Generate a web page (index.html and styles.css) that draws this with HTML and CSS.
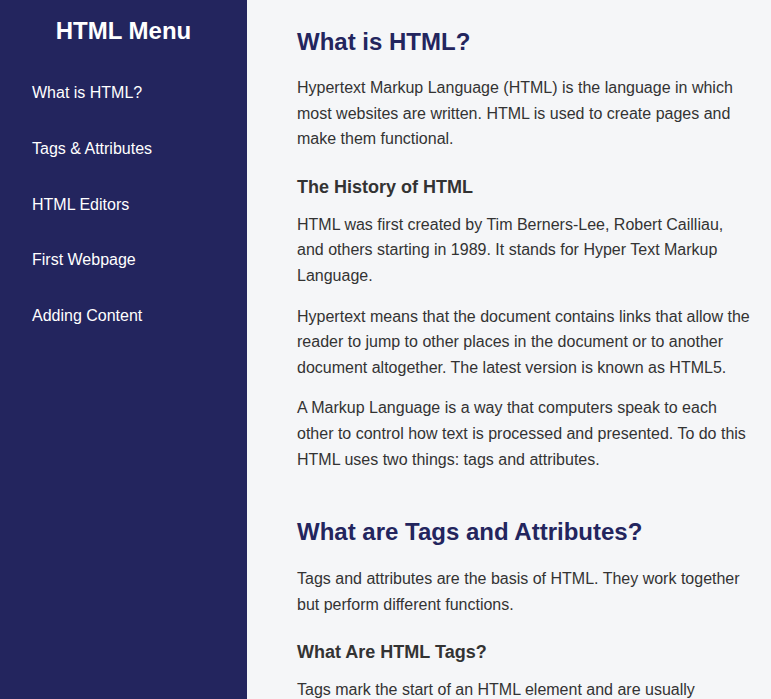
FILE: index.html
```html
<!DOCTYPE html>
<html lang="en">
<head>
<meta charset="utf-8">
<title>HTML Menu</title>
<link rel="stylesheet" href="styles.css">
</head>
<body>
<div class="layout">
  <nav class="sidebar">
    <h2 class="sidebar-title">HTML Menu</h2>
    <ul class="nav-list">
      <li><a class="nav-link" href="#what">What is HTML?</a></li>
      <li><a class="nav-link" href="#tags">Tags &amp; Attributes</a></li>
      <li><a class="nav-link" href="#editors">HTML Editors</a></li>
      <li><a class="nav-link" href="#first">First Webpage</a></li>
      <li><a class="nav-link" href="#content">Adding Content</a></li>
    </ul>
  </nav>
  <main class="content">
    <section class="section" id="what">
      <h1 class="section-title">What is HTML?</h1>
      <p class="text">Hypertext Markup Language (HTML) is the language in which most websites are written. HTML is used to create pages and make them functional.</p>
      <h2 class="sub-title">The History of HTML</h2>
      <p class="text">HTML was first created by Tim Berners-Lee, Robert Cailliau, and others starting in 1989. It stands for Hyper Text Markup Language.</p>
      <p class="text">Hypertext means that the document contains links that allow the reader to jump to other places in the document or to another document altogether. The latest version is known as HTML5.</p>
      <p class="text">A Markup Language is a way that computers speak to each other to control how text is processed and presented. To do this HTML uses two things: tags and attributes.</p>
    </section>
    <section class="section" id="tags">
      <h1 class="section-title">What are Tags and Attributes?</h1>
      <p class="text">Tags and attributes are the basis of HTML. They work together but perform different functions.</p>
      <h2 class="sub-title">What Are HTML Tags?</h2>
      <p class="text">Tags mark the start of an HTML element and are usually enclosed in angle brackets. Most tags must be opened and closed in order to function.</p>
    </section>
  </main>
</div>
</body>
</html>
```
FILE: styles.css
```css
html, body {
  margin: 0;
  padding: 0;
}
body {
  font-family: "Liberation Sans", Arial, sans-serif;
  background: #f5f6f8;
  color: #333333;
}
.layout {
  display: grid;
  grid-template-columns: 247px 1fr;
  min-height: 100vh;
}
.sidebar {
  background: #23255e;
  padding-top: 17px;
}
.sidebar-title {
  margin: 0 0 20px;
  font-size: 24px;
  line-height: 28px;
  font-weight: bold;
  color: #ffffff;
  text-align: center;
}
.nav-list {
  list-style: none;
  margin: 0;
  padding: 0;
}
.nav-link {
  display: block;
  padding: 18px 32px 17.75px;
  font-size: 16px;
  line-height: 20px;
  color: #ffffff;
  text-decoration: none;
}
.content {
  padding: 28px 20px 0 50px;
  display: flex;
  flex-direction: column;
  gap: 31px;
}
.section {
  display: flex;
  flex-direction: column;
}
.section-title {
  margin: 0 0 19px;
  font-size: 24px;
  line-height: 28px;
  font-weight: bold;
  color: #23255e;
}
.section + .section .section-title {
  margin-bottom: 20px;
}
.sub-title {
  margin: 9px 0 14px;
  font-size: 18px;
  line-height: 22px;
  font-weight: bold;
  color: #333333;
}
.text {
  margin: 0 0 15px;
  font-size: 16px;
  line-height: 1.6;
}
```
